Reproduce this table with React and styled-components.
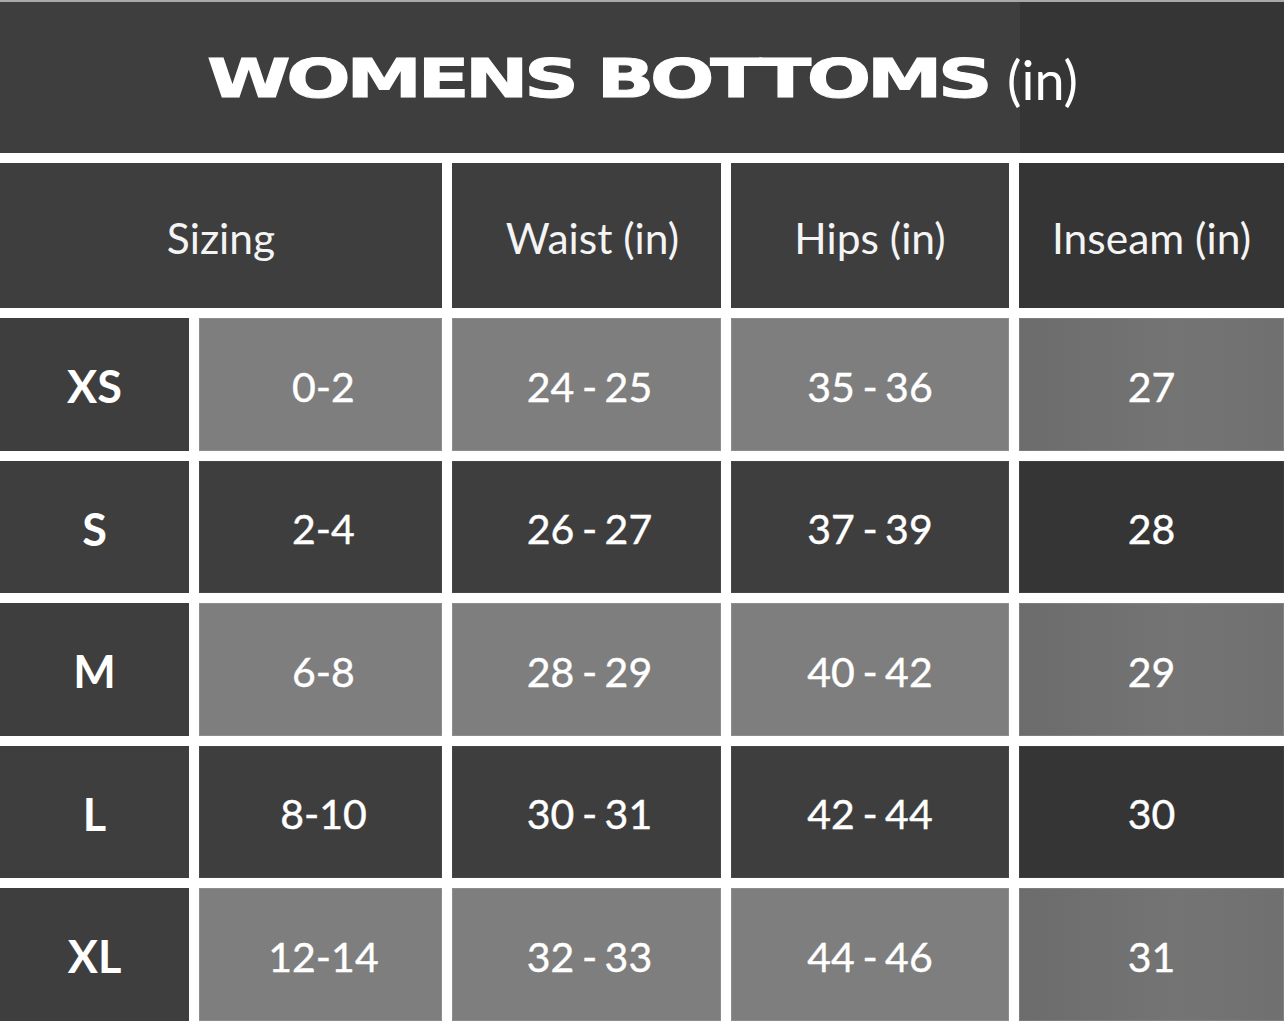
import React from "react";
import styled, { createGlobalStyle } from "styled-components";

const Global = createGlobalStyle`
  html, body {
    margin: 0;
    padding: 0;
    background: #ffffff;
    overflow: hidden;
  }
  body {
    font-family: Lato, "Open Sans", sans-serif;
  }
`;

const Page = styled.div`
  width: 1284px;
  height: 1031px;
  overflow: hidden;
  background: #ffffff;
  border-top: 2px solid #a9a9a9;
  box-sizing: border-box;
`;

const TitleBar = styled.div`
  height: 151px;
  display: flex;
  align-items: center;
  justify-content: flex-end;
  padding-right: 206px;
  box-sizing: border-box;
  background: linear-gradient(to right, #3e3e3e 0, #3e3e3e 1020px, #353535 1020px);
  margin-bottom: 10px;
  color: #ffffff;
`;

const TitleMain = styled.span`
  display: inline-block;
  font-family: "DejaVu Sans", "Liberation Sans", sans-serif;
  font-weight: 700;
  font-size: 53px;
  letter-spacing: -3px;
  -webkit-text-stroke: 1px #ffffff;
  transform: scaleX(1.43);
  transform-origin: right center;
  margin-top: 2px;
`;

const TitleUnit = styled.span`
  display: inline-block;
  font-family: Lato, sans-serif;
  font-weight: 400;
  font-size: 54px;
  margin-left: 19px;
  margin-top: 4px;
`;

const Table = styled.div`
  display: grid;
  grid-template-columns: 189px 243px 269px 278px 1fr;
  grid-template-rows: 145px repeat(5, 132.5px);
  gap: 10px 10px;
`;

const HeadCell = styled.div`
  grid-column: ${(p) => p.$span || "auto"};
  display: flex;
  align-items: center;
  justify-content: center;
  background: ${(p) => (p.$inseam ? "#353535" : "#3e3e3e")};
  color: #f4f4f4;
  font-family: Lato, sans-serif;
  font-size: 42.5px;
  font-weight: 400;
  padding-top: 4px;
  padding-left: ${(p) => (p.$shift ? "12px" : "0")};
  box-sizing: border-box;
`;

const SizeCell = styled.div`
  display: flex;
  align-items: center;
  justify-content: center;
  background: #3e3e3e;
  color: #ffffff;
  font-family: Lato, sans-serif;
  font-size: 45px;
  font-weight: 700;
  padding-top: 4px;
  box-sizing: border-box;
`;

const ValueCell = styled.div`
  display: flex;
  align-items: center;
  justify-content: center;
  color: #ffffff;
  font-family: Lato, sans-serif;
  font-size: 41px;
  font-weight: 400;
  word-spacing: -3px;
  -webkit-text-stroke: 0.4px #ffffff;
  padding-top: 4px;
  padding-left: ${(p) => (p.$shift ? "6px" : "0")};
  box-sizing: border-box;
  background: ${(p) =>
    p.$light
      ? p.$inseam
        ? "linear-gradient(to right, #6c6c6c, #747474 60%, #707070)"
        : "#7e7e7e"
      : p.$inseam
      ? "#353535"
      : "#3e3e3e"};
  box-shadow: inset 0 0 0 1px
    ${(p) => (p.$light ? "rgba(255,255,255,0.12)" : "rgba(255,255,255,0.05)")};
`;

const rows = [
  { size: "XS", sizing: "0-2", waist: "24 - 25", hips: "35 - 36", inseam: "27" },
  { size: "S", sizing: "2-4", waist: "26 - 27", hips: "37 - 39", inseam: "28" },
  { size: "M", sizing: "6-8", waist: "28 - 29", hips: "40 - 42", inseam: "29" },
  { size: "L", sizing: "8-10", waist: "30 - 31", hips: "42 - 44", inseam: "30" },
  { size: "XL", sizing: "12-14", waist: "32 - 33", hips: "44 - 46", inseam: "31" },
];

export default function App() {
  return (
    <>
      <Global />
      <Page>
        <TitleBar>
          <TitleMain>WOMENS BOTTOMS</TitleMain>
          <TitleUnit>(in)</TitleUnit>
        </TitleBar>
        <Table>
          <HeadCell $span="span 2">Sizing</HeadCell>
          <HeadCell $shift>Waist (in)</HeadCell>
          <HeadCell>Hips (in)</HeadCell>
          <HeadCell $inseam>Inseam (in)</HeadCell>
          {rows.map((r, i) => {
            const light = i % 2 === 0;
            return (
              <React.Fragment key={r.size}>
                <SizeCell>{r.size}</SizeCell>
                <ValueCell $light={light} $shift>{r.sizing}</ValueCell>
                <ValueCell $light={light} $shift>{r.waist}</ValueCell>
                <ValueCell $light={light}>{r.hips}</ValueCell>
                <ValueCell $light={light} $inseam>{r.inseam}</ValueCell>
              </React.Fragment>
            );
          })}
        </Table>
      </Page>
    </>
  );
}
